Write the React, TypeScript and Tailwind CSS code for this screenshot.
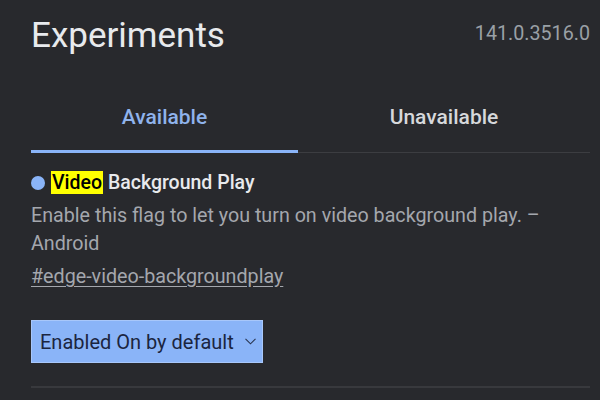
const font = { fontFamily: "Roboto, 'Noto Sans', sans-serif" };

export default function App() {
  return (
    <div
      className="h-[400px] w-[600px] overflow-hidden bg-[#28292d] pl-[31px] pr-[10px]"
      style={font}
    >
      <div className="flex items-start justify-between pt-[12px]">
        <h1 className="text-[35px] leading-[48px] text-[#e8eaed]">Experiments</h1>
        <span className="pt-[10px] text-[19.7px] leading-[24px] text-[#9aa0a6]">
          141.0.3516.0
        </span>
      </div>

      <div className="mt-[32px] flex border-b border-[#3c3d41]">
        <div className="-mb-px flex h-[61px] w-[267px] items-center justify-center border-b-[3px] border-[#8ab4f8] pb-[6px] text-[21px] font-medium text-[#8fb3ec]">
          Available
        </div>
        <div className="flex h-[60px] flex-1 items-center justify-center pb-[9px] text-[21px] font-medium text-[#d6d8db]">
          Unavailable
        </div>
      </div>

      <div className="pt-[19px]">
        <div className="flex items-center gap-[6px] text-[19.5px] font-medium leading-[22px] text-[#e8eaed]">
          <span className="h-[14px] w-[14px] rounded-full bg-[#8ab4f8]" />
          <span>
            <span className="bg-[#ffff00] px-[1px] text-black">Video</span> Background Play
          </span>
        </div>
        <p className="mt-[8px] text-[19.7px] leading-[28px] text-[#a4a7ad]">
          Enable this flag to let you turn on video background play. – Android
        </p>
        <a className="mt-[5px] block text-[19.7px] leading-[28px] text-[#a4a7ad] underline underline-offset-[3px]">
          #edge-video-backgroundplay
        </a>
        <button className="mt-[29px] flex h-[43px] w-[232px] items-center gap-[11px] border border-[#a8c7fa] bg-[#8ab4f8] pl-[8px] text-[20px] text-[#1b2540]">
          Enabled On by default
          <svg width="11" height="7" viewBox="0 0 11 7" fill="none" stroke="#2a3550" strokeWidth="1.1">
            <path d="M0.5 0.8 L5.5 5.8 L10.5 0.8" />
          </svg>
        </button>
      </div>

      <div className="mt-[23px] border-t-2 border-[#38393d]" />
    </div>
  );
}
